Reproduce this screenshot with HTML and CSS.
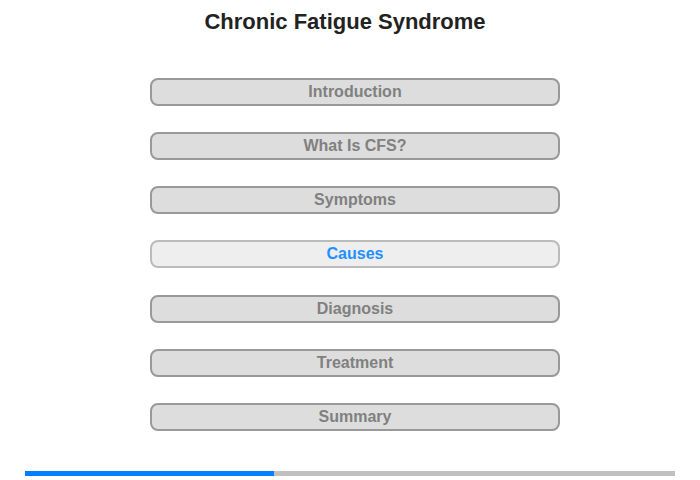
FILE: index.html
```html
<!DOCTYPE html>
<html lang="en">
<head>
    <meta charset="UTF-8">
    <title>Chronic Fatigue Syndrome</title>
    <link rel="stylesheet" href="styles.css">
</head>
<body>
    <div class="page">
        <h1 class="title">Chronic Fatigue Syndrome</h1>
        <ul class="menu">
            <li>Introduction</li>
            <li>What Is CFS?</li>
            <li>Symptoms</li>
            <li class="active">Causes</li>
            <li>Diagnosis</li>
            <li>Treatment</li>
            <li>Summary</li>
        </ul>
        <div class="progress">
            <div class="done" style="width: 249px"></div>
        </div>
    </div>
</body>
</html>
```

FILE: styles.css
```css
body{
    margin: 0;
    font-family: "Liberation Sans", Arial, sans-serif;
    background: #fff;
}
.page{
    width: 700px;
    height: 480px;
    display: flex;
    flex-direction: column;
}
.title{
    margin: 9px 0 0 0;
    padding-right: 10px;
    height: 26px;
    line-height: 26px;
    font-size: 22px;
    font-weight: bold;
    text-align: center;
    color: #222;
}
.menu{
    list-style: none;
    margin: 43px 0 0 150px;
    padding: 0;
    display: flex;
    flex-direction: column;
    gap: 26.17px;
}
.menu li{
    box-sizing: border-box;
    width: 410px;
    height: 28px;
    line-height: 24px;
    border: 2px solid #999;
    border-radius: 8px;
    background: #ddd;
    color: #808080;
    font-size: 16px;
    font-weight: bold;
    text-align: center;
    cursor: pointer;
}
.menu li.active{
    background: #eee;
    border-color: #bbb;
    color: #1e90ff;
}
.progress{
    margin: 40px 0 0 25px;
    width: 650px;
    height: 5px;
    background: #c0c0c0;
}
.progress .done{
    height: 5px;
    background: #0080ff;
}
```
